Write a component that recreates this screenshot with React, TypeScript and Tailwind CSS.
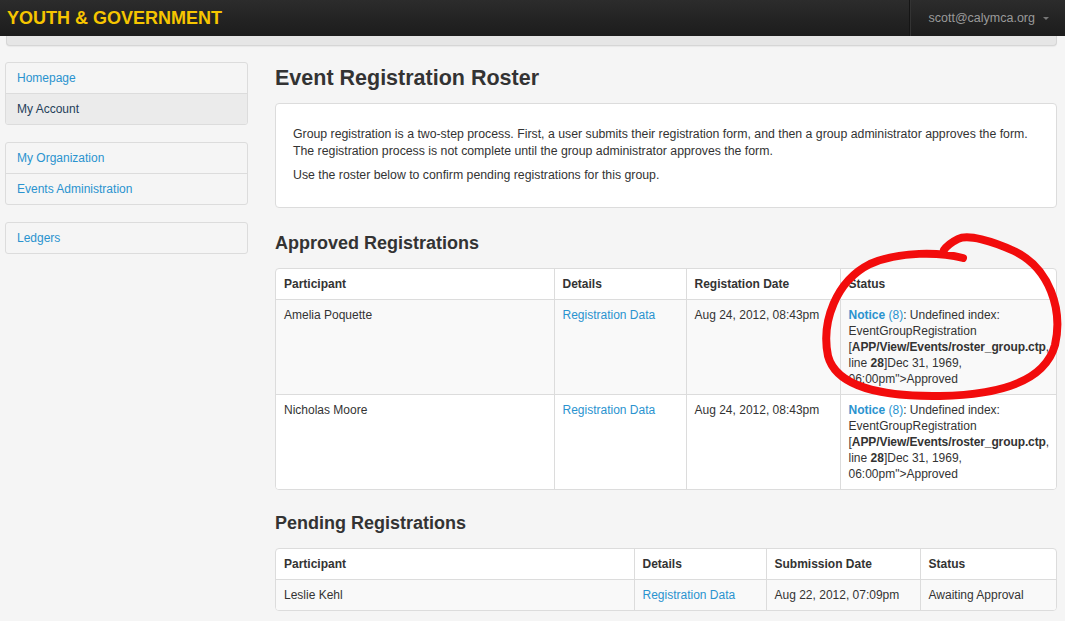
const link = "text-[#2a93cf]";

function SideGroup({ items }: { items: { label: string; active?: boolean }[] }) {
  return (
    <div className="border border-[#dcdcdc] rounded-[3px] bg-[#f5f5f5] overflow-hidden">
      {items.map((it, i) => (
        <div
          key={it.label}
          className={`px-[11px] py-2 leading-[14px] text-[12px] ${i > 0 ? "border-t border-[#dcdcdc]" : ""} ${
            it.active ? "bg-[#ebebeb] text-[#25405a]" : link
          }`}
        >
          {it.label}
        </div>
      ))}
    </div>
  );
}

function Status() {
  return (
    <div className="whitespace-nowrap">
      <span className={link}>
        <b>Notice</b> (8)
      </span>
      : Undefined index:
      <br />
      EventGroupRegistration
      <br />[<b className="tracking-[-0.1px]">APP/View/Events/roster_group.ctp</b>,
      <br />
      line <b>28</b>]Dec 31, 1969,
      <br />
      06:00pm"&gt;Approved
    </div>
  );
}

export default function App() {
  const approved = [
    { name: "Amelia Poquette", date: "Aug 24, 2012, 08:43pm" },
    { name: "Nicholas Moore", date: "Aug 24, 2012, 08:43pm" },
  ];

  return (
    <div
      className="relative w-[1073px] h-[621px] overflow-hidden bg-white text-[#333] text-[12px]"
      style={{ fontFamily: '"Liberation Sans", Arial, sans-serif' }}
    >
      <div className="w-[1065px] h-full bg-[#f5f5f5]">
        {/* navbar */}
        <div className="h-9 flex items-center bg-gradient-to-b from-[#2c2c2c] to-[#1c1c1c]">
          <div className="pl-[7px] text-[18px] font-bold text-[#f6c500]">YOUTH &amp; GOVERNMENT</div>
          <div className="ml-auto h-full flex items-center pl-[19px] pr-[16px] border-l border-[#151515] shadow-[inset_1px_0_0_#333]">
            <span className="text-[#9a9a9a] text-[12.5px]">scott@calymca.org</span>
            <span className="ml-[8px] mt-[1px] w-0 h-0 border-l-[3px] border-r-[3px] border-t-[3px] border-l-transparent border-r-transparent border-t-[#777]" />
          </div>
        </div>
        <div className="ml-[6px] w-[1051px] h-[10px] bg-[#e6e6e6] border border-t-0 border-[#d6d6d6] rounded-b-[4px] shadow-[0_1px_1px_rgba(0,0,0,0.05)]" />

        <div className="flex pl-[5px]">
          {/* sidebar */}
          <div className="w-[243px] mt-[16px] flex flex-col gap-[17px]">
            <SideGroup items={[{ label: "Homepage" }, { label: "My Account", active: true }]} />
            <SideGroup items={[{ label: "My Organization" }, { label: "Events Administration" }]} />
            <SideGroup items={[{ label: "Ledgers" }]} />
          </div>

          {/* main */}
          <div className="ml-[27px] w-[782px]">
            <h1 className="mt-[20px] text-[21.5px] leading-[24px] font-bold text-[#333]">Event Registration Roster</h1>
            <div className="mt-[13px] h-[105px] bg-white border border-[#dcdcdc] rounded-[4px] px-[17px] pt-[22px] text-[12.3px]">
              <p className="leading-[17px]">
                Group registration is a two-step process. First, a user submits their registration form, and then a
                group administrator approves the form.
                <br />
                The registration process is not complete until the group administrator approves the form.
              </p>
              <p className="leading-[17px] mt-[7px]">Use the roster below to confirm pending registrations for this group.</p>
            </div>

            <h2 className="mt-[25px] text-[18px] leading-[20px] font-bold text-[#333]">Approved Registrations</h2>
            <div className="mt-[15px] bg-white border border-[#dcdcdc] rounded-[4px] overflow-hidden">
              <table className="w-full border-collapse table-fixed">
                <colgroup>
                  <col className="w-[278px]" />
                  <col className="w-[132px]" />
                  <col className="w-[154px]" />
                  <col />
                </colgroup>
                <thead>
                  <tr>
                    {["Participant", "Details", "Registation Date", "Status"].map((h, i) => (
                      <th
                        key={h}
                        className={`text-left font-bold px-2 py-2 leading-[14px] ${i > 0 ? "border-l border-[#dcdcdc]" : ""}`}
                      >
                        {h}
                      </th>
                    ))}
                  </tr>
                </thead>
                <tbody>
                  {approved.map((r, i) => (
                    <tr key={r.name} className={`align-top ${i === 0 ? "bg-[#f9f9f9]" : "bg-white"}`}>
                      <td className="border-t border-[#dcdcdc] px-2 py-[7px] leading-4">{r.name}</td>
                      <td className={`border-t border-l border-[#dcdcdc] px-2 py-[7px] leading-4 ${link}`}>
                        Registration Data
                      </td>
                      <td className="border-t border-l border-[#dcdcdc] px-2 py-[7px] leading-4">{r.date}</td>
                      <td className="border-t border-l border-[#dcdcdc] px-2 py-[7px] leading-4">
                        <Status />
                      </td>
                    </tr>
                  ))}
                </tbody>
              </table>
            </div>

            <h2 className="mt-[23px] text-[18px] leading-[20px] font-bold text-[#333]">Pending Registrations</h2>
            <div className="mt-[15px] bg-white border border-[#dcdcdc] rounded-[4px] overflow-hidden">
              <table className="w-full border-collapse table-fixed">
                <colgroup>
                  <col className="w-[358px]" />
                  <col className="w-[132px]" />
                  <col className="w-[154px]" />
                  <col />
                </colgroup>
                <thead>
                  <tr>
                    {["Participant", "Details", "Submission Date", "Status"].map((h, i) => (
                      <th
                        key={h}
                        className={`text-left font-bold px-2 py-2 leading-[14px] ${i > 0 ? "border-l border-[#dcdcdc]" : ""}`}
                      >
                        {h}
                      </th>
                    ))}
                  </tr>
                </thead>
                <tbody>
                  <tr className="bg-[#f9f9f9]">
                    <td className="border-t border-[#dcdcdc] px-2 py-[7px] leading-4">Leslie Kehl</td>
                    <td className={`border-t border-l border-[#dcdcdc] px-2 py-[7px] leading-4 ${link}`}>
                      Registration Data
                    </td>
                    <td className="border-t border-l border-[#dcdcdc] px-2 py-[7px] leading-4">Aug 22, 2012, 07:09pm</td>
                    <td className="border-t border-l border-[#dcdcdc] px-2 py-[7px] leading-4">Awaiting Approval</td>
                  </tr>
                </tbody>
              </table>
            </div>
          </div>
        </div>
      </div>

      {/* hand-drawn red annotation */}
      <svg className="absolute top-0 left-0 pointer-events-none" width="1073" height="621" viewBox="0 0 1073 621">
        <path
          d="M963 258 C940 252, 900 251, 870 264 C836 281, 821 322, 828 356 C836 386, 880 397, 940 396 C1000 395, 1045 381, 1055 345 C1063 310, 1050 268, 1014 251 C992 241, 968 234, 958 239 C950 243, 946 247, 944 250"
          fill="none"
          stroke="#f20c0c"
          strokeWidth="8"
          strokeLinecap="round"
          strokeLinejoin="round"
        />
      </svg>
    </div>
  );
}
